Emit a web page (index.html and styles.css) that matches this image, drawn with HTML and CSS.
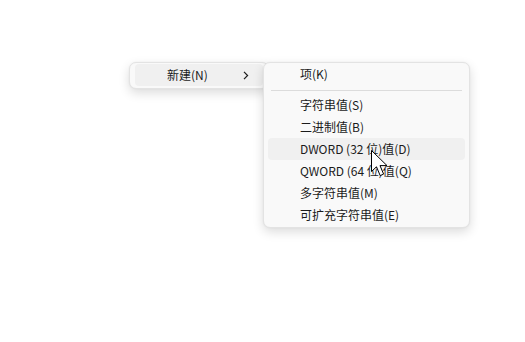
FILE: index.html
```html
<!DOCTYPE html>
<html lang="zh-CN">
<head>
<meta charset="utf-8">
<title>新建</title>
<link rel="stylesheet" href="styles.css">
</head>
<body>
<div class="canvas">
  <div class="menu menu-parent">
    <div class="item active">
      <span class="label">新建(N)</span>
      <svg class="chev" width="6" height="9" viewBox="0 0 6 9"><polyline points="1,0.8 4.6,4.5 1,8.2" fill="none" stroke="#1b1b1b" stroke-width="1.2"/></svg>
    </div>
  </div>
  <div class="menu menu-sub">
    <div class="item"><span class="label">项(K)</span></div>
    <div class="sep"></div>
    <div class="item"><span class="label">字符串值(S)</span></div>
    <div class="item"><span class="label">二进制值(B)</span></div>
    <div class="item hover"><span class="label">DWORD (32 位)值(D)</span></div>
    <div class="item"><span class="label">QWORD (64 位)值(Q)</span></div>
    <div class="item"><span class="label">多字符串值(M)</span></div>
    <div class="item"><span class="label">可扩充字符串值(E)</span></div>
  </div>
  <svg class="cursor" width="19" height="28" viewBox="0 0 19 28"><path d="M0.5,0.5 L0.5,21.5 L5.5,16.8 L9.2,25.6 L12.6,24.1 L9,15.6 L16,15.6 Z" fill="#fff" stroke="#000" stroke-width="1" stroke-linejoin="miter"/></svg>
</div>
</body>
</html>
```
FILE: styles.css
```css
html, body {
  margin: 0;
  padding: 0;
  background: #ffffff;
}
.canvas {
  position: relative;
  width: 525px;
  height: 342px;
  overflow: hidden;
  font-family: "Noto Sans CJK SC", "Microsoft YaHei", "Noto Sans", sans-serif;
  font-size: 12px;
  color: #1b1b1b;
}
.menu {
  position: absolute;
  box-sizing: border-box;
  background: #f9f9f9;
  border: 1px solid #e3e3e3;
  border-radius: 7px;
  box-shadow: 0 4px 11px rgba(0, 0, 0, 0.14), 0 0 2px rgba(0, 0, 0, 0.05);
}
.menu-parent {
  left: 129px;
  top: 62px;
  width: 140px;
  height: 27px;
  padding: 1px 5px;
}
.menu-parent .item {
  padding-left: 32px;
  padding-right: 14px;
  justify-content: space-between;
}
.chev {
  display: block;
}
.menu-sub {
  left: 263px;
  top: 62px;
  width: 207px;
  padding: 0 4px 1px;
}
.item {
  display: flex;
  align-items: center;
  height: 22px;
  padding-left: 32px;
  border-radius: 4px;
  line-height: 22px;
  white-space: nowrap;
}
.item.active, .item.hover {
  background: #f0f0f0;
}
.sep {
  height: 1px;
  background: #dcdcdc;
  margin: 5px 3px 3px;
}
.cursor {
  position: absolute;
  left: 371px;
  top: 150px;
}
```
